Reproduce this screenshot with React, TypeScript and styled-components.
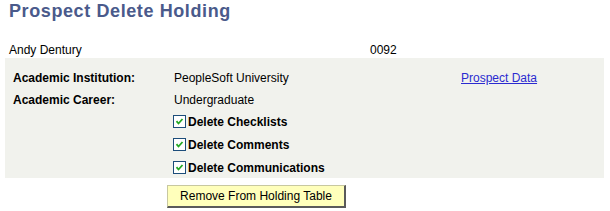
import React from "react";
import styled, { createGlobalStyle } from "styled-components";

const Global = createGlobalStyle`
  html, body { margin: 0; padding: 0; background: #ffffff; }
  body { font-family: "Liberation Sans", Arial, sans-serif; font-size: 12px; color: #000; }
`;

const Page = styled.div`
  width: 610px;
  height: 211px;
  overflow: hidden;
  display: flex;
  flex-direction: column;
`;

const Title = styled.h1`
  margin: 0 0 0 9px;
  font-size: 18px;
  line-height: 22px;
  letter-spacing: 0.6px;
  font-weight: bold;
  color: #4a5a8b;
`;

const HeaderRow = styled.div`
  display: grid;
  grid-template-columns: 361px auto;
  margin-top: 21px;
  padding-left: 9px;
  line-height: 14px;
  height: 14px;
`;

const Panel = styled.div`
  box-sizing: border-box;
  margin: 1px 6px 0 5px;
  background: #f1f2ed;
  padding: 9px 0 0 8px;
  height: 120px;
`;

const Row = styled.div<{ $h: number }>`
  display: grid;
  grid-template-columns: 161px 287px auto;
  align-items: center;
  height: ${(p) => p.$h}px;
`;

const Label = styled.span`
  font-weight: bold;
`;

const Link = styled.a`
  color: #2b2bd0;
  text-decoration: underline;
  cursor: pointer;
`;

const CheckRow = styled.label`
  display: flex;
  align-items: center;
  gap: 2px;
  height: 23px;
  padding-left: 160px;
  font-weight: bold;
`;

const Box = styled.span`
  width: 11px;
  height: 11px;
  border: 1px solid #1c4d7a;
  background: #ffffff;
  display: inline-flex;
  align-items: center;
  justify-content: center;
`;

const Button = styled.button`
  margin: 7px 0 0 167px;
  align-self: flex-start;
  height: 23px;
  width: 179px;
  padding: 0;
  background: #ffffbb;
  border-style: solid;
  border-color: #c8c8a0 #5a5a5a #5a5a5a #c8c8a0;
  border-width: 1px 2px 2px 1px;
  font-family: "Liberation Sans", Arial, sans-serif;
  font-size: 12px;
  color: #000;
`;

const Check = () => (
  <Box>
    <svg width="9" height="9" viewBox="0 0 9 9">
      <path d="M1.5 4.2 L3.5 6.5 L7.5 2" fill="none" stroke="#22a822" strokeWidth="1.8" />
    </svg>
  </Box>
);

export default function App() {
  return (
    <Page>
      <Global />
      <Title>Prospect Delete Holding</Title>
      <HeaderRow>
        <span>Andy Dentury</span>
        <span>0092</span>
      </HeaderRow>
      <Panel>
        <Row $h={22}>
          <Label>Academic Institution:</Label>
          <span>PeopleSoft University</span>
          <Link>Prospect Data</Link>
        </Row>
        <Row $h={21}>
          <Label>Academic Career:</Label>
          <span>Undergraduate</span>
        </Row>
        <CheckRow><Check />Delete Checklists</CheckRow>
        <CheckRow><Check />Delete Comments</CheckRow>
        <CheckRow><Check />Delete Communications</CheckRow>
      </Panel>
      <Button>Remove From Holding Table</Button>
    </Page>
  );
}
